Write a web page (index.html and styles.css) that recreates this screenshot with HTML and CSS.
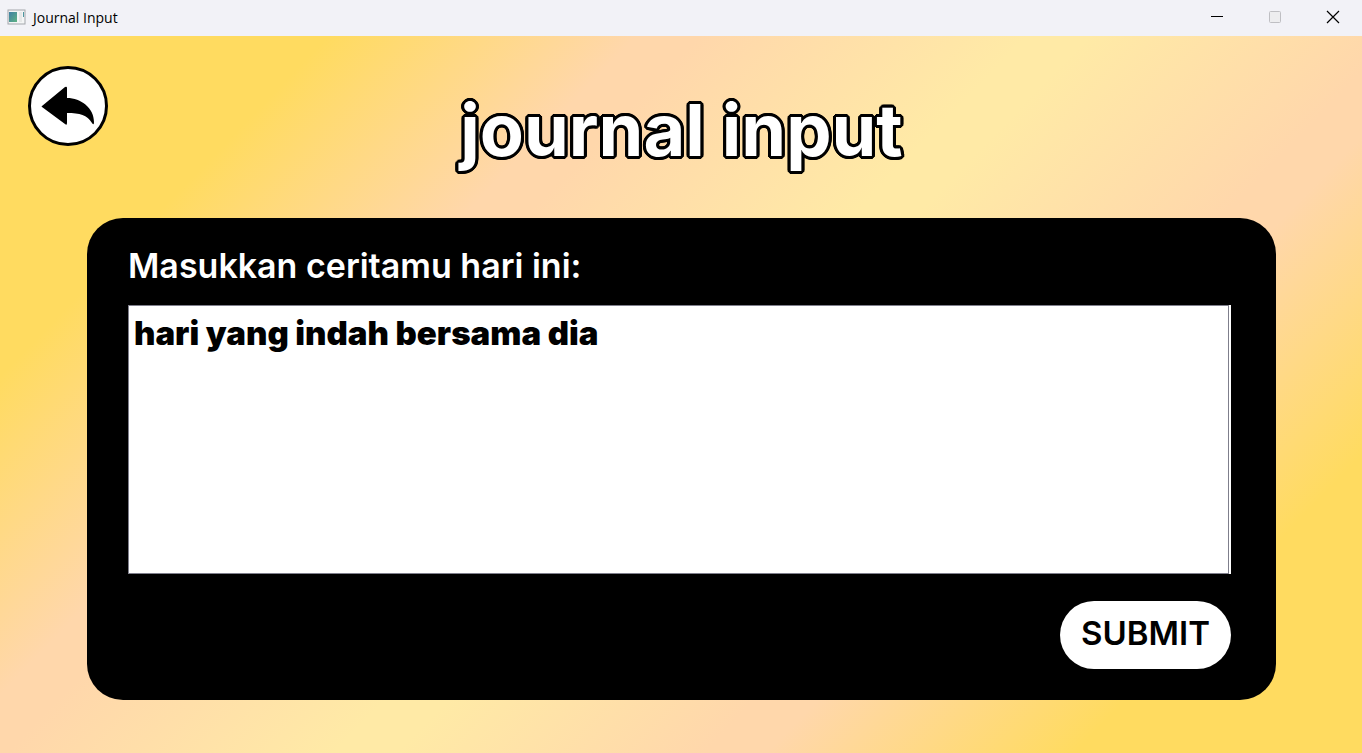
FILE: index.html
```
<!DOCTYPE html>
<html lang="id">
<head>
<meta charset="utf-8">
<title>Journal Input</title>
<link rel="stylesheet" href="styles.css">
</head>
<body>
<header class="titlebar">
  <svg class="app-icon" width="20" height="16" viewBox="0 0 20 16" aria-hidden="true">
    <defs>
      <linearGradient id="pane" x1="0" y1="0" x2="1" y2="1">
        <stop offset="0" stop-color="#3f7fa5"/>
        <stop offset="1" stop-color="#5fb283"/>
      </linearGradient>
    </defs>
    <rect x="1" y="1" width="17" height="14" fill="#f4f5f6" stroke="#a3a6ac"/>
    <rect x="2" y="3" width="8" height="10" fill="url(#pane)"/>
    <rect x="12" y="3" width="3" height="10" fill="#e6e8e8"/>
    <rect x="16" y="3" width="1" height="5" fill="#4d96a0"/>
  </svg>
  <span class="titlebar-text">Journal Input</span>
  <div class="window-controls">
    <button class="window-button" type="button" aria-label="Minimize">
      <svg width="14" height="14" viewBox="0 0 14 14"><path d="M1 6.5H13" stroke="#000"/></svg>
    </button>
    <button class="window-button" type="button" aria-label="Maximize" disabled>
      <svg width="14" height="14" viewBox="0 0 14 14"><rect x="1.500" y="1.500" width="11" height="11" rx="1" fill="#ededef" stroke="#bfbfc3"/></svg>
    </button>
    <button class="window-button" type="button" aria-label="Close">
      <svg width="14" height="14" viewBox="0 0 14 14"><path d="M1 1L13 13M13 1L1 13" stroke="#000" stroke-width="1.200"/></svg>
    </button>
  </div>
</header>
<main class="page">
  <div class="top">
    <button class="back" type="button" aria-label="Back">
      <svg width="54" height="40" viewBox="0 0 54 40" aria-hidden="true">
        <path d="M1 20L24 1Q26 0 26 2V12C40 12 53 22 53 36Q53 40 51 37C46 29 39 27 26 27V37Q26 40 24 38L1 21Q0 20 1 20Z"/>
      </svg>
    </button>
    <h1 class="heading">journal input</h1>
  </div>
  <form class="card">
    <label class="label" for="story">Masukkan ceritamu hari ini:</label>
    <div class="field"><textarea class="story" id="story" spellcheck="false">hari yang indah bersama dia</textarea></div>
    <button class="submit" type="button">SUBMIT</button>
  </form>
</main>
</body>
</html>
```
FILE: styles.css
```
* { box-sizing: border-box; }

body {
  margin: 0;
  min-height: 100vh;
  display: flex;
  flex-direction: column;
  font-family: Inter, "Liberation Sans", sans-serif;
  color: #000;
}

button { font: inherit; color: inherit; border: 0; padding: 0; }

.titlebar {
  height: 36px;
  flex: none;
  display: flex;
  align-items: center;
  padding: 0 0 2px 7px;
  background: #f2f2f7;
}

.app-icon { flex: none; }

.titlebar-text {
  margin-left: 6px;
  font-family: "Open Sans", "Noto Sans", sans-serif;
  font-size: 14px;
}

.window-controls { display: flex; margin-left: auto; align-self: stretch; }

.window-button {
  width: 58px;
  display: grid;
  place-items: center;
  background: transparent;
}

.page {
  flex: 1;
  display: flex;
  flex-direction: column;
  padding: 30px 86px 53px 87px;
  background: linear-gradient(134deg, #ffdb60 16%, #ffd7ab 31%, #ffd7ab 34%, #ffeaa6 50%, #ffeaa6 53%, #ffd7ab 68%, #ffd7ab 71%, #ffdb60 86%);
}

.top {
  display: grid;
  grid-template-columns: 80px 1fr 80px;
  height: 152px;
  margin: 0 -59px;
  align-items: start;
}

.back {
  width: 80px;
  height: 80px;
  display: grid;
  place-items: center;
  border: 3px solid #000;
  border-radius: 50%;
  background: #fff;
}

.heading {
  margin: 20px 0 0;
  text-align: center;
  font-size: 72px;
  line-height: 88px;
  font-weight: 700;
  color: #fff;
  text-shadow:
    3px 0 #000, -3px 0 #000, 0 3px #000, 0 -3px #000,
    2px 2px #000, -2px 2px #000, 2px -2px #000, -2px -2px #000,
    3px 1px #000, -3px 1px #000, 3px -1px #000, -3px -1px #000,
    1px 3px #000, -1px 3px #000, 1px -3px #000, -1px -3px #000;
}

.card {
  flex: 1;
  display: flex;
  flex-direction: column;
  padding: 28px 45px 31px 41px;
  border-radius: 36px;
  background: #000;
}

.label {
  font-size: 34px;
  line-height: 40px;
  font-weight: 600;
  color: #fff;
}

.field {
  flex: 1;
  display: flex;
  min-height: 120px;
  margin: 19px 0 27px;
  padding-right: 2px;
  background: #fff;
}

.story {
  flex: 1;
  border: 1px solid #7f7f8c;
  border-radius: 0;
  outline: 0;
  padding: 7px 5px;
  resize: none;
  background: #fff;
  color: #000;
  font-family: Inter, "Liberation Sans", sans-serif;
  font-size: 33px;
  line-height: 40px;
  font-weight: 900;
}

.submit {
  align-self: flex-end;
  width: 171px;
  height: 68px;
  padding-bottom: 4px;
  border-radius: 36px;
  background: #fff;
  font-size: 33px;
  font-weight: 600;
}
```
